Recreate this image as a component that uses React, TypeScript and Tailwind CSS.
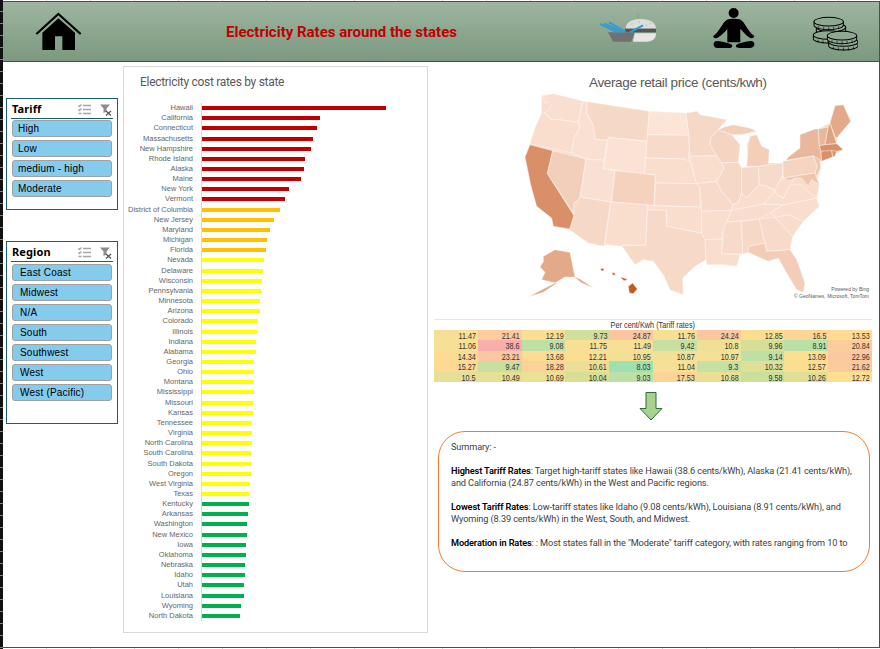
const bars: [string, number, string][] = [
  ['Hawaii', 184, 'bg-[#c00000]'], ['California', 118, 'bg-[#c00000]'], ['Connecticut', 115, 'bg-[#c00000]'],
  ['Massachusetts', 111, 'bg-[#c00000]'], ['New Hampshire', 109, 'bg-[#c00000]'], ['Rhode Island', 103, 'bg-[#c00000]'],
  ['Alaska', 102, 'bg-[#c00000]'], ['Maine', 99, 'bg-[#c00000]'], ['New York', 87, 'bg-[#c00000]'], ['Vermont', 83, 'bg-[#c00000]'],
  ['District of Columbia', 78, 'bg-[#ffc000]'], ['New Jersey', 72, 'bg-[#ffc000]'], ['Maryland', 68, 'bg-[#ffc000]'],
  ['Michigan', 65, 'bg-[#ffc000]'], ['Florida', 64, 'bg-[#ffc000]'],
  ['Nevada', 62, 'bg-[#ffff00]'], ['Delaware', 61, 'bg-[#ffff00]'], ['Wisconsin', 60, 'bg-[#ffff00]'], ['Pennsylvania', 59, 'bg-[#ffff00]'],
  ['Minnesota', 58, 'bg-[#ffff00]'], ['Arizona', 58, 'bg-[#ffff00]'], ['Colorado', 56, 'bg-[#ffff00]'], ['Illinois', 55, 'bg-[#ffff00]'],
  ['Indiana', 54, 'bg-[#ffff00]'], ['Alabama', 54, 'bg-[#ffff00]'], ['Georgia', 52, 'bg-[#ffff00]'], ['Ohio', 52, 'bg-[#ffff00]'],
  ['Montana', 52, 'bg-[#ffff00]'], ['Mississippi', 52, 'bg-[#ffff00]'], ['Missouri', 51, 'bg-[#ffff00]'], ['Kansas', 51, 'bg-[#ffff00]'],
  ['Tennessee', 50, 'bg-[#ffff00]'], ['Virginia', 50, 'bg-[#ffff00]'], ['North Carolina', 50, 'bg-[#ffff00]'], ['South Carolina', 49, 'bg-[#ffff00]'],
  ['South Dakota', 49, 'bg-[#ffff00]'], ['Oregon', 49, 'bg-[#ffff00]'], ['West Virginia', 48, 'bg-[#ffff00]'], ['Texas', 47, 'bg-[#ffff00]'],
  ['Kentucky', 47, 'bg-[#00b050]'], ['Arkansas', 46, 'bg-[#00b050]'], ['Washington', 45, 'bg-[#00b050]'], ['New Mexico', 45, 'bg-[#00b050]'],
  ['Iowa', 44, 'bg-[#00b050]'], ['Oklahoma', 44, 'bg-[#00b050]'], ['Nebraska', 43, 'bg-[#00b050]'], ['Idaho', 43, 'bg-[#00b050]'],
  ['Utah', 42, 'bg-[#00b050]'], ['Louisiana', 42, 'bg-[#00b050]'], ['Wyoming', 39, 'bg-[#00b050]'], ['North Dakota', 38, 'bg-[#00b050]'],
];

const rates = [
  [11.47, 21.41, 12.19, 9.73, 24.87, 11.76, 24.24, 12.85, 16.5, 13.53],
  [11.06, 38.6, 9.08, 11.75, 11.49, 9.42, 10.8, 9.96, 8.91, 20.84],
  [14.34, 23.21, 13.68, 12.21, 10.95, 10.87, 10.97, 9.14, 13.09, 22.96],
  [15.27, 9.47, 18.28, 10.61, 8.03, 11.04, 9.3, 10.32, 12.57, 21.62],
  [10.5, 10.49, 10.69, 10.04, 9.03, 17.53, 10.68, 9.58, 10.26, 12.72],
];

// colour scale of the heat table, read off the screenshot
const scale: [number, number[]][] = [
  [8, [158, 224, 176]], [9.1, [190, 224, 165]], [10, [215, 222, 150]], [11, [245, 224, 150]],
  [13, [254, 222, 145]], [24, [251, 198, 160]], [38.6, [248, 174, 170]],
];

function rateColor(v: number) {
  for (let i = 1; i < scale.length; i++) {
    const [hi, c1] = scale[i];
    const [lo, c0] = scale[i - 1];
    if (v <= hi) {
      const t = (v - lo) / (hi - lo);
      return `rgb(${c0.map((c, k) => Math.round(c + (c1[k] - c) * t)).join(',')})`;
    }
  }
  return 'rgb(248,174,170)';
}

const usOutline =
  '125,78 160,72 248,94 448,125 558,130 592,125 600,135 680,150 655,180 695,195 720,225 715,278 725,295 745,290 740,225 750,200 770,195 785,230 808,240 805,280 848,280 858,272 865,262 900,235 900,195 945,178 955,178 990,160 1005,108 1030,105 1052,155 1010,205 1010,222 1030,240 1010,250 965,275 960,270 962,295 950,340 958,345 950,385 958,410 910,455 878,500 870,540 890,570 915,640 910,668 890,660 860,610 835,565 805,575 745,548 720,555 710,590 670,585 620,585 618,570 585,590 548,625 550,675 510,660 490,615 460,575 430,570 405,585 365,528 315,525 312,530 265,520 208,480 160,470 155,445 110,410 92,345 75,262 90,222 105,175 125,130';

const states: [string, string][] = [
  ['#f9dfd0', '125,78 160,72 248,94 235,158 190,152 150,148 135,130 155,108 145,98 135,100'], // WA
  ['#f9ddcd', '125,130 135,130 150,148 190,152 235,158 240,175 222,205 215,250 90,222 105,175'], // OR
  ['#d98f68', '90,225 158,243 142,312 222,438 210,478 160,470 155,445 110,410 92,345 75,262'], // CA
  ['#f2cfba', '158,243 258,268 240,385 232,395 222,400 222,432 142,312'], // NV
  ['#fae0d2', '248,94 262,96 260,130 280,165 285,208 322,212 312,272 258,268 215,250 222,205 240,175 235,158'], // ID
  ['#f6d8c7', '262,96 448,125 442,215 325,203 322,212 285,208 280,165 260,130'], // MT
  ['#fbe2d5', '325,203 442,215 433,313 310,297'], // WY
  ['#fae0d2', '258,268 312,272 310,297 345,303 335,397 240,382'], // UT
  ['#f5d2bd', '345,303 465,315 462,408 335,397'], // CO
  ['#f6d8c7', '240,382 332,397 312,530 265,520 208,480 222,438 222,400 232,395'], // AZ
  ['#f9ddcd', '332,397 442,405 438,527 370,525 367,530 315,525'], // NM
  ['#fce4d7', '448,125 558,130 567,197 442,195'], // ND
  ['#f7dac9', '442,195 567,197 568,220 565,275 550,268 437,265'], // SD
  ['#f9ddcd', '437,265 550,268 572,275 590,342 467,340 465,315 433,312'], // NE
  ['#f7dac9', '467,340 590,342 600,355 600,412 462,408'], // KS
  ['#f9ddcd', '442,408 600,412 605,425 605,490 560,482 500,470 498,422 442,420'], // OK
  ['#f7d9c8', '442,420 498,422 500,470 560,482 605,490 615,510 618,570 585,590 548,625 550,675 510,660 490,615 460,575 430,570 405,585 365,528 438,527'], // TX
  ['#f6d8c7', '558,130 592,125 600,135 680,150 632,205 630,225 650,258 570,260 567,197'], // MN
  ['#f9ddcd', '570,260 650,258 672,295 660,318 650,335 590,342 572,275'], // IA
  ['#f7dac9', '590,342 650,335 665,365 700,405 695,422 605,425 600,355'], // MO
  ['#f9ddcd', '605,425 695,422 680,457 670,480 668,508 615,510 605,490'], // AR
  ['#f9ddcd', '615,510 668,508 665,552 720,555 710,590 670,585 620,585 618,570'], // LA
  ['#f5d5c2', '632,205 655,180 695,195 720,225 715,278 665,280 650,258 630,225'], // WI
  ['#f6d8c7', '665,280 715,278 725,295 725,370 715,400 700,405 665,365 650,335 660,318 672,295'], // IL
  ['#f3cfba', '745,225 740,290 775,290 805,285 808,240 785,230 770,195 750,200'], // MI lower
  ['#f3cfba', '655,180 672,172 700,165 750,175 770,185 725,195 695,195'], // MI upper
  ['#f6d8c7', '725,295 775,290 778,345 740,385 725,370'], // IN
  ['#f7dac9', '775,290 805,285 848,280 848,320 825,360 800,350 778,345'], // OH
  ['#f9ddcd', '715,400 725,370 740,385 778,345 800,350 825,365 790,403 695,422 700,405'], // KY
  ['#f8dccc', '695,422 790,403 850,405 810,430 778,448 680,457'], // TN
  ['#f7dac9', '680,457 725,455 728,552 665,552 668,508 670,480'], // MS
  ['#f6d8c7', '725,455 778,448 795,520 745,530 748,548 728,552'], // AL
  ['#f7dac9', '778,448 825,443 878,500 870,540 800,545 795,520'], // GA
  ['#f3cdb8', '745,530 795,520 800,545 870,540 890,570 915,640 910,668 890,660 860,610 835,565 805,575 745,548'], // FL
  ['#f8dccc', '825,443 865,435 910,455 878,500'], // SC
  ['#f9ddcd', '810,430 850,405 950,385 958,410 910,455 865,435 825,443'], // NC
  ['#f9ddcd', '790,403 825,365 830,375 850,385 870,345 905,345 925,365 950,385 850,405'], // VA
  ['#f8dccc', '825,360 848,320 850,328 885,325 870,345 850,385 830,375'], // WV
  ['#f5d5c2', '848,275 940,258 952,290 945,310 850,325'], // PA
  ['#e8b79e', '858,272 865,262 900,235 900,195 945,178 955,178 958,228 963,245 965,275 950,270 940,258'], // NY
  ['#efc5ad', '940,258 960,270 962,295 950,320 945,310 952,290'], // NJ
  ['#f3cfba', '945,312 950,340 958,345 948,318'], // DE
  ['#efc5ad', '850,325 945,310 958,345 935,330 925,350 905,325 885,325 868,333'], // MD
  ['#e8b79e', '955,178 985,172 975,225 958,228'], // VT
  ['#dfa280', '985,172 990,160 1010,222 975,225'], // NH
  ['#e3a988', '990,160 1005,108 1030,105 1052,155 1010,205 1005,200'], // ME
  ['#d98f68', '958,228 975,225 1010,222 1030,240 1010,245 963,245'], // MA
  ['#d98f68', '963,245 995,242 998,262 965,275'], // CT
  ['#db9570', '995,242 1010,245 1005,260 998,262'], // RI
  ['#e3a988', '130,560 165,540 210,548 225,622 240,628 282,656 245,640 222,622 195,622 165,640 125,630 135,608 120,592 130,576'], // AK
  ['#e3a988', '165,640 172,640 130,668 85,682 125,660'], // AK peninsula
  ['#c55a1e', '385,650 398,640 412,658 400,672 388,670'], // HI
  ['#c55a1e', '302,596 312,597 311,603 303,603'], // HI kauai
  ['#c55a1e', '336,608 345,611 346,617 338,616'], // HI oahu
  ['#c55a1e', '360,622 372,625 384,630 372,633'], // HI maui
];

function Slicer({ title, items, className, textIndent, headerGap }: { title: string; items: string[]; className: string; textIndent: string; headerGap: string }) {
  return (
    <div className={`w-[112px] border-[1.5px] border-[#1a5c7a] px-[5px] pt-[3px] ${className}`}>
      <div className={`flex items-center justify-between h-[15px] border-b-[1.5px] border-[#1a5c7a] box-content pb-[1px] -mx-[1px] ${headerGap}`}>
        <span className="text-[11px] font-bold text-black font-['Noto_Sans',sans-serif] tracking-[0.1px] ml-[1px]">{title}</span>
        <div className="flex items-center gap-[8px] mr-[1px]">
          <svg width="13" height="11" viewBox="0 0 13 11" fill="none" stroke="#a6a6a6" strokeWidth="1.4">
            <path d="M5 1.5h8M5 5.5h8M5 9.5h8" />
            <path d="M0.5 1.5l1 1 2-2M0.5 5.5l1 1 2-2M0.5 9.5h3" />
          </svg>
          <svg width="13" height="12" viewBox="0 0 13 12">
            <path d="M1 0.5h10l-3.5 4v3l-3 1.5v-4.5z" fill="#8c8c8c" />
            <path d="M7 7l5 4.5M12 7l-5 4.5" stroke="#555555" strokeWidth="1.3" />
          </svg>
        </div>
      </div>
      <div className="flex flex-col gap-[3px]">
        {items.map((item) => (
          <div
            key={item}
            className={`h-[17px] bg-[#84cbec] border-[1.5px] border-[#a0a0a0] rounded-[3px] flex items-center text-[10px] text-black font-['Liberation_Sans',sans-serif] tracking-[0.2px] ${textIndent}`}
          >
            {item}
          </div>
        ))}
      </div>
    </div>
  );
}

function HomeIcon() {
  return (
    <svg className="mt-[10px] ml-[32px] shrink-0" width="46.7" height="38.3" viewBox="105 35 140 115">
      <path d="M109 101L175 41L242 101" fill="none" stroke="#000" strokeWidth="6.5" />
      <path d="M127 97L175 54L225 97V149H187V108H165V149H127Z" fill="#000" />
    </svg>
  );
}

function FoodIcon() {
  return (
    <svg className="mt-[8px] ml-[142.3px] shrink-0" width="60" height="33.3" viewBox="55 30 180 100">
      <path d="M172 42l4 6-3 5" fill="none" stroke="#7d957f" strokeWidth="2" />
      <path d="M138 86C138 66 158 57 184 57C212 57 229 68 229 86Z" fill="#dddddd" />
      <path d="M155 72h3M178 66h3M198 76h3M212 70h3" stroke="#8c8c8c" strokeWidth="2" />
      <path d="M136 86H229V97H136Z" fill="#555555" />
      <path d="M165 100H229C229 116 220 125 200 125H160Z" fill="#e6e6e6" />
      <path d="M85 97H165L155 125H100Z" fill="#707070" />
      <path d="M62 72L115 98M74 70L128 97M88 67L138 96M150 97L190 76" stroke="#2e9bd6" strokeWidth="6" fill="none" />
    </svg>
  );
}

function PersonIcon() {
  return (
    <svg className="mt-[4.7px] ml-[53.4px] shrink-0" width="43.3" height="43.3" viewBox="395 20 130 130">
      <circle cx="460" cy="38" r="15" fill="#000" />
      <path d="M440 58C450 54 470 54 481 58C495 66 498 88 522 107C522 114 512 116 506 111C492 100 485 90 480 86V126H441V86C436 92 428 102 414 111C408 116 398 114 399 107C422 88 426 66 440 58Z" fill="#000" />
      <path d="M410 122C428 124 445 128 455 133C458 140 452 143 445 143H412C396 143 396 122 410 122Z" fill="#000" />
      <path d="M512 122C494 124 478 128 468 133C464 140 470 143 478 143H510C526 143 526 122 512 122Z" fill="#000" />
    </svg>
  );
}

function Coin({ cx, cy }: { cx: number; cy: number }) {
  return (
    <g fill="#8fa892" stroke="#000" strokeWidth="3">
      <path d={`M${cx - 44} ${cy}v11c0 7 20 13 44 13s44-6 44-13v-11`} />
      <ellipse cx={cx} cy={cy} rx="44" ry="13" />
      <path d={`M${cx - 30} ${cy + 14}v8M${cx - 15} ${cy + 16}v9M${cx} ${cy + 17}v9M${cx + 15} ${cy + 16}v9M${cx + 30} ${cy + 14}v8`} strokeWidth="2" />
    </g>
  );
}

function CoinsIcon() {
  return (
    <svg className="mt-[13px] ml-[56.7px] shrink-0" width="46.7" height="36.7" viewBox="695 45 140 110">
      <Coin cx={752} cy={82} />
      <Coin cx={745} cy={65} />
      <Coin cx={743} cy={105} />
      <Coin cx={789} cy={126} />
      <Coin cx={785} cy={107} />
    </svg>
  );
}

export default function App() {
  return (
    <div className="w-[880px] h-[649px] flex bg-white overflow-hidden font-['Liberation_Sans',sans-serif]">
      {/* sheet row headers */}
      <div className="w-[3px] h-full bg-[repeating-linear-gradient(to_bottom,#111111_0px,#111111_11px,#808080_11px,#808080_12px)]" />

      <div className="flex-1 flex flex-col">
        <div className="h-[1px] bg-[repeating-linear-gradient(to_right,#ffffff_0px,#ffffff_43px,#d9d9d9_43px,#d9d9d9_44px)]" />

        {/* Header */}
        <header className="h-[61px] flex items-start border-t-[1.5px] border-b-[1.5px] border-r-[1.5px] border-t-[#1e6b3a] border-b-[#1a5c7a] border-r-[#1e6b3a] bg-gradient-to-b from-[#9eb5a0] to-[#7c997f] mr-[0.5px]">
          <HomeIcon />
          <h1 className="ml-[144.3px] mt-[21px] w-[230px] shrink-0 whitespace-nowrap text-[15px] leading-[18px] font-bold text-[#c00000] font-['Roboto',sans-serif]">
            Electricity Rates around the states
          </h1>
          <FoodIcon />
          <PersonIcon />
          <CoinsIcon />
        </header>

        {/* Body */}
        <main className="flex-1 flex border-r-[1.5px] border-b-[1.5px] border-[#1a5c7a] mr-[0.5px]">
          <aside className="w-[120px] shrink-0 pl-[3px] pt-[36px]">
            <Slicer title="Tariff" items={['High', 'Low', 'medium - high', 'Moderate']} className="h-[112px]" textIndent="pl-[5px]" headerGap="mb-[1px]" />
            <Slicer title="Region" items={['East Coast', 'Midwest', 'N/A', 'South', 'Southwest', 'West', 'West (Pacific)']} className="h-[183px] mt-[31px]" textIndent="pl-[7px]" headerGap="mb-[2px]" />
          </aside>

          {/* Bar chart */}
          <section className="w-[305px] h-[567px] mt-[4px] shrink-0 border-[1.5px] border-[#d9d9d9]">
            <h2 className="ml-[16px] mt-[8px] h-[28px] text-[12px] leading-[15px] tracking-[-0.3px] text-[#595959] font-['Roboto',sans-serif]">
              Electricity cost rates by state
            </h2>
            <div className="flex flex-col">
              {bars.map(([name, width, color]) => (
                <div key={name} className="h-[10.17px] flex items-center">
                  <span className="w-[69px] text-right text-[7.5px] leading-[10px] text-[#666666] whitespace-nowrap font-['Liberation_Sans',sans-serif]">{name}</span>
                  <div className="ml-[8px] h-full border-l border-[#d9d9d9] flex items-center">
                    <div className={`h-[4px] ${color}`} style={{ width }} />
                  </div>
                </div>
              ))}
            </div>
          </section>

          {/* Right column */}
          <section className="flex-1 flex flex-col">
            <h2 className="ml-[161px] mt-[12px] h-[19px] text-[13.5px] leading-[18px] tracking-[-0.35px] text-[#595959] whitespace-nowrap">Average retail price (cents/kwh)</h2>

            <div className="relative ml-[72px] w-[370px] h-[217px]">
              <svg width="370" height="216.7" viewBox="0 70 1110 650">
                <polygon points={usOutline} fill="#f8dccc" />
                {states.map(([fill, points], i) => (
                  <polygon key={i} points={points} fill={fill} stroke="#ffffff" strokeWidth="1.3" strokeLinejoin="round" />
                ))}
              </svg>
              <div className="absolute right-[1px] bottom-[10px] text-right text-[5px] leading-[7px] text-[#595959]">
                <div>Powered by Bing</div>
                <div>© GeoNames, Microsoft, TomTom</div>
              </div>
            </div>

            {/* Heat table */}
            <div className="ml-[6px] mt-[9px] w-[438px] border-t border-[#e6e6e6]">
              <div className="h-[9.5px] text-center text-[9.5px] leading-[10px] text-[#333333] whitespace-nowrap">
                <span className="inline-block origin-center scale-x-[0.77]">Per cent/Kwh (Tariff rates)</span>
              </div>
              <div className="grid grid-cols-10">
                {rates.flat().map((v, i) => (
                  <div key={i} className="h-[10.6px] pr-[2px] text-right text-[9.5px] leading-[11px] text-[#333333]" style={{ backgroundColor: rateColor(v) }}>
                    <span className="inline-block origin-right scale-x-[0.76]">{v}</span>
                  </div>
                ))}
              </div>
            </div>

            <svg className="ml-[211px] mt-[10px]" width="24" height="29" viewBox="0 0 24 29">
              <path d="M7 0.5H17V16.5H23L12 28L1 16.5H7Z" fill="#a9d18e" stroke="#2f6b3c" strokeWidth="1" />
            </svg>

            {/* Summary */}
            <div className="ml-[10px] mt-[10px] w-[432px] h-[141px] rounded-[27px] border border-[#ed7d31] pl-[12px] pt-[9px] text-[9.2px] leading-[12px] tracking-[-0.12px] text-[#404040] font-['Roboto',sans-serif] whitespace-nowrap">
              <p>Summary: -</p>
              <p className="mt-[12px]"><b className="text-black font-semibold">Highest Tariff Rates</b>: Target high-tariff states like Hawaii (38.6 cents/kWh), Alaska (21.41 cents/kWh),<br />and California (24.87 cents/kWh) in the West and Pacific regions.</p>
              <p className="mt-[12px]"><b className="text-black font-semibold">Lowest Tariff Rates</b>: Low-tariff states like Idaho (9.08 cents/kWh), Louisiana (8.91 cents/kWh), and<br />Wyoming (8.39 cents/kWh) in the West, South, and Midwest.</p>
              <p className="mt-[12px]"><b className="text-black font-semibold">Moderation in Rates</b>: : Most states fall in the "Moderate" tariff category, with rates ranging from 10 to</p>
            </div>
          </section>
        </main>

        <div className="h-[1.5px] bg-[repeating-linear-gradient(to_right,#ffffff_0px,#ffffff_43px,#d9d9d9_43px,#d9d9d9_44px)]" />
      </div>
    </div>
  );
}
